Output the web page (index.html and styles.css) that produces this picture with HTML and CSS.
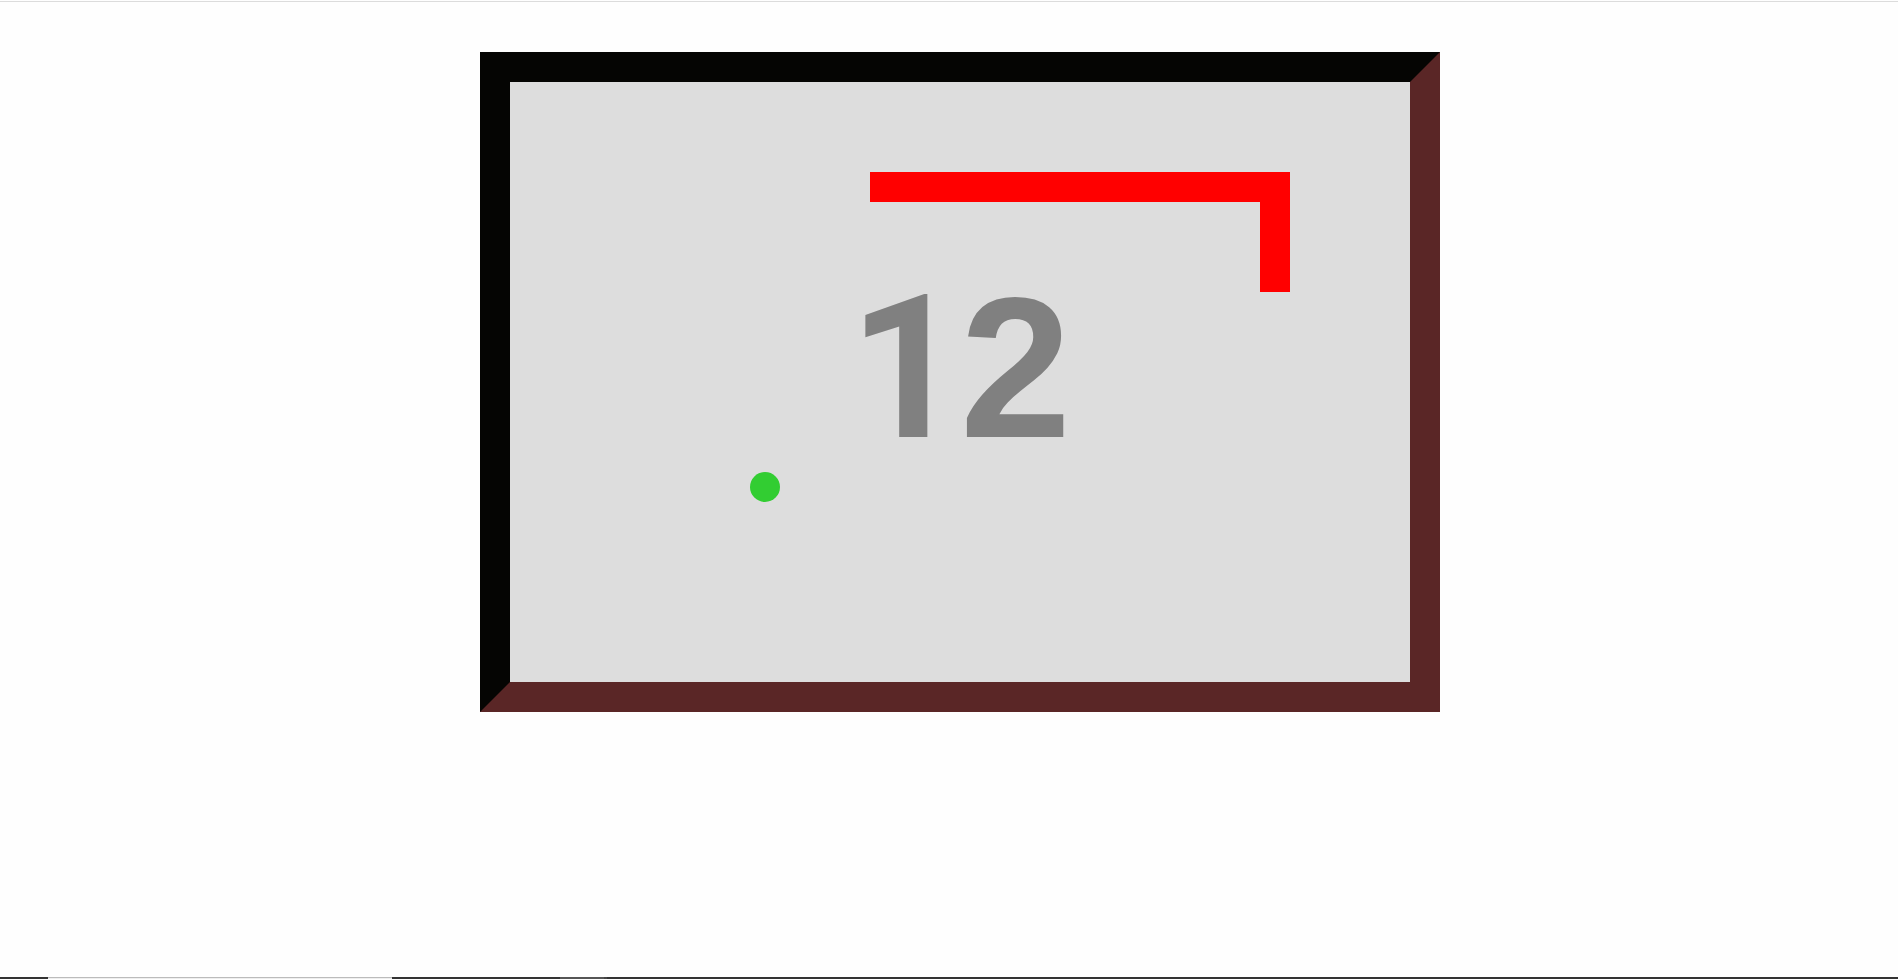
FILE: index.html
```html
<!DOCTYPE html>
<html>
<head>
<meta charset="utf-8">
<title>Snake</title>
<link rel="stylesheet" href="styles.css">
</head>
<body>
<div class="topline"></div>
<main class="stage">
  <div class="board">
    <svg class="field" width="900" height="600" viewBox="0 0 900 600">
      <rect x="0" y="0" width="900" height="600" fill="#dddddd"/>
      <text y="355" class="score"><tspan x="339" class="digit-one">1</tspan><tspan x="450" class="digit-two">2</tspan></text>
      <rect x="360" y="90" width="420" height="30" fill="#ff0000"/>
      <rect x="750" y="90" width="30" height="120" fill="#ff0000"/>
      <circle cx="255" cy="405" r="15" fill="#32cd32"/>
    </svg>
  </div>
</main>
<div class="bottombar">
  <div class="seg seg-light"></div>
  <div class="seg seg-dark1"></div>
  <div class="seg seg-gray"></div>
  <div class="seg seg-dark2"></div>
  <div class="seg seg-rest"></div>
</div>
</body>
</html>
```
FILE: styles.css
```css
html, body {
  margin: 0;
  padding: 0;
  background: #fefefe;
  font-family: "Liberation Sans", Arial, sans-serif;
  height: 100%;
  overflow: hidden;
}
.topline {
  margin-top: 1px;
  height: 1px;
  background: #dcdcdc;
}
.stage {
  padding-top: 50px;
  padding-left: 480px;
}
.board {
  width: 900px;
  height: 600px;
  border: 30px solid;
  border-color: #050503 #5a2626 #5a2626 #050503;
}
.field {
  display: block;
}
.score {
  font-family: "Liberation Sans", Arial, sans-serif;
  font-weight: bold;
  font-size: 200px;
  fill: #808080;
}
.digit-one {
  font-family: Roboto, "Liberation Sans", sans-serif;
}
.digit-two {
  font-family: "Liberation Sans", Arial, sans-serif;
}
.bottombar {
  position: fixed;
  left: 0;
  right: 0;
  bottom: 0;
  height: 2px;
  display: flex;
  background: #333333;
}
.seg {
  height: 100%;
}
.seg-light {
  margin-left: 48px;
  width: 344px;
  background: #eeeeee;
  border-top: 1px solid #bbbbbb;
  box-sizing: border-box;
}
.seg-dark1 {
  width: 168px;
  background: #333333;
}
.seg-gray {
  width: 44px;
  background: #555555;
}
.seg-dark2 {
  width: 3px;
  background: #444444;
}
.seg-rest {
  flex: 1;
  background: #333333;
}
```
